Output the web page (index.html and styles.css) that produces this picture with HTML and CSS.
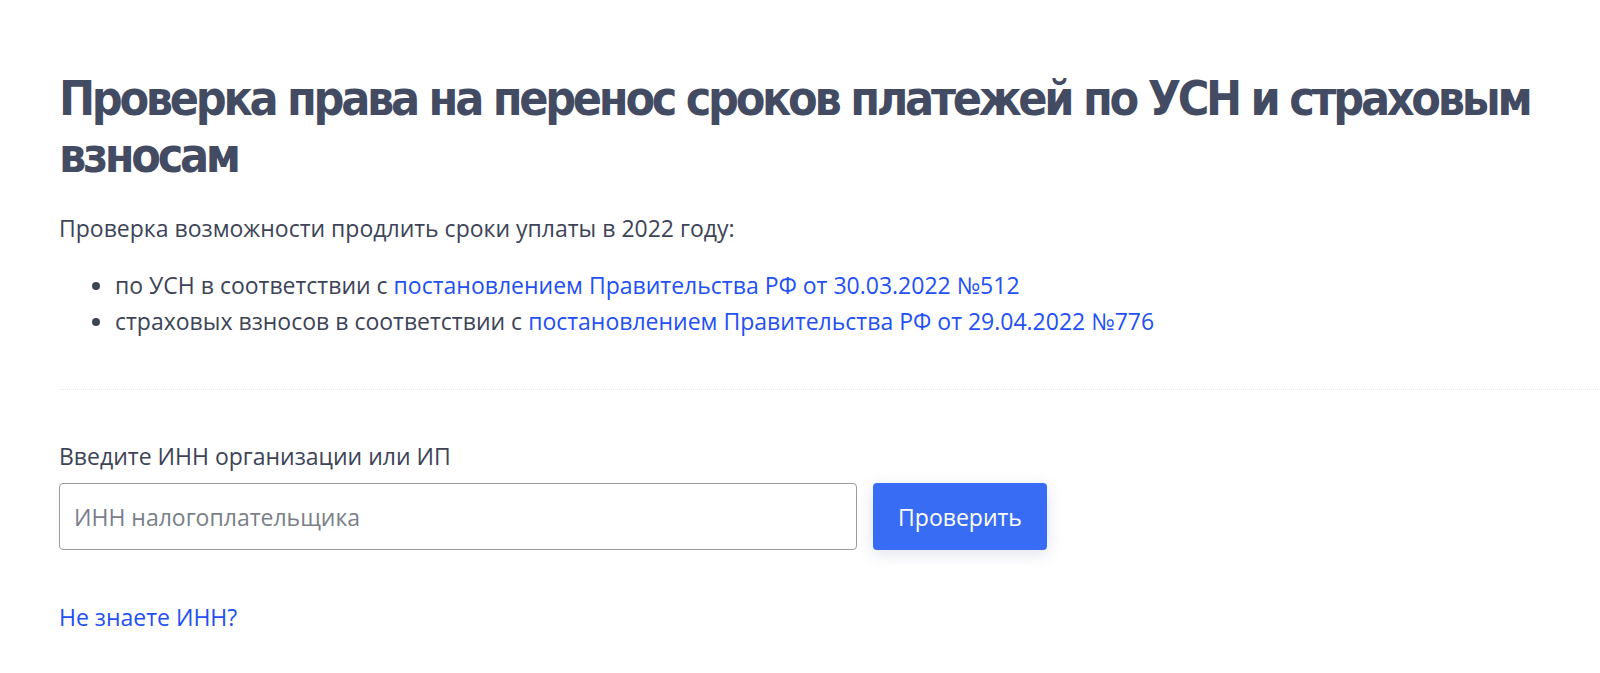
FILE: index.html
```html
<!DOCTYPE html>
<html lang="ru">
<head>
  <meta charset="UTF-8" />
  <title>Проверка права на перенос сроков</title>
  <link rel="stylesheet" href="styles.css">
</head>
<body>
  <div class="page">
    <h1>Проверка права на перенос сроков платежей по УСН и страховым взносам</h1>

    <p class="lead">Проверка возможности продлить сроки уплаты в 2022 году:</p>
    <ul class="docs">
      <li>по УСН в соответствии с <a href="#">постановлением Правительства РФ от 30.03.2022 №512</a></li>
      <li>страховых взносов в соответствии с <a href="#">постановлением Правительства РФ от 29.04.2022 №776</a></li>
    </ul>

    <hr class="divider">

    <form class="check-form">
      <label for="inn">Введите ИНН организации или ИП</label>
      <div class="row">
        <input id="inn" name="inn" placeholder="ИНН налогоплательщика">
        <button type="button">Проверить</button>
      </div>
    </form>

    <a class="help" href="#">Не знаете ИНН?</a>
  </div>
</body>
</html>
```

FILE: styles.css
```css
body {
  margin: 0;
  background: #fff;
  font-family: 'Open Sans', sans-serif;
  font-size: 23px;
  color: #3d4457;
}

.page {
  padding: 70px 0 0 59px;
}

h1 {
  font-family: 'DejaVu Sans Condensed', sans-serif;
  font-stretch: condensed;
  font-weight: bold;
  font-size: 48px;
  letter-spacing: -3.3px;
  line-height: 57px;
  color: #434b63;
  margin: 0;
}

.lead {
  margin: 27px 0 22px;
  line-height: 34px;
}

.docs {
  margin: 0;
  padding-left: 56px;
  line-height: 36px;
}

a {
  color: #2350f5;
  text-decoration: none;
}

.divider {
  border: none;
  border-top: 1px dotted #e6e8ec;
  margin: 50px 0 0;
}

.check-form {
  margin-top: 51px;
}

.check-form label {
  display: block;
  line-height: 30px;
  margin-bottom: 12px;
}

.row {
  display: flex;
  gap: 16px;
}

.row input {
  width: 798px;
  height: 67px;
  box-sizing: border-box;
  border: 1px solid #9a9a9a;
  border-radius: 4px;
  padding: 0 14px;
  font-family: inherit;
  font-size: 23px;
  color: #3d4457;
}

.row input::placeholder {
  color: #7a7f8a;
}

.row button {
  width: 174px;
  height: 67px;
  border: none;
  border-radius: 4px;
  background: #386cf4;
  color: #fff;
  font-family: inherit;
  font-size: 23px;
  box-shadow: 0 4px 16px rgba(40, 60, 120, 0.15);
  cursor: pointer;
}

.help {
  display: inline-block;
  margin-top: 52px;
  line-height: 30px;
}
```
